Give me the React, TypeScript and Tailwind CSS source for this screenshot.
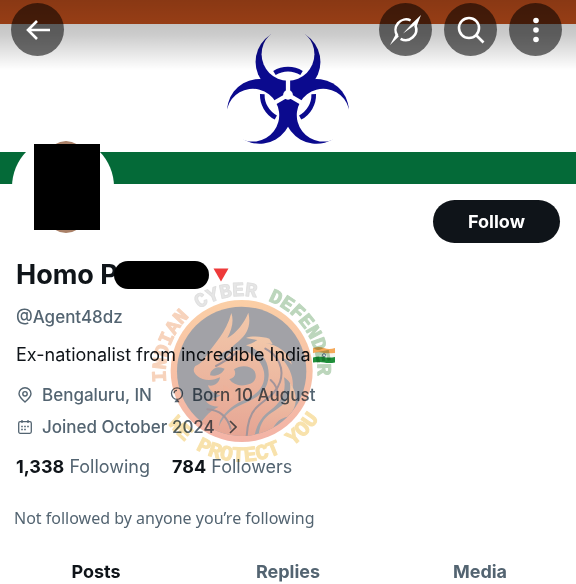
import { ReactNode } from "react";
import clsx from "clsx";

const HORN_ANGLES = [0, 120, 240];

const TABS = ["Posts", "Replies", "Media"];

const Biohazard = () => (
  <svg viewBox="-66 -66 132 124" className="mt-[7px] h-[120px] w-[128px]" aria-hidden="true">
    <mask id="horns" maskUnits="userSpaceOnUse" x="-80" y="-80" width="160" height="160">
      {HORN_ANGLES.map((angle) => (
        <circle key={angle} cy="-34" r="33.5" fill="#fff" transform={`rotate(${angle})`} />
      ))}
      {HORN_ANGLES.map((angle) => (
        <g key={angle} transform={`rotate(${angle})`}>
          <circle cy="-42" r="27.3" />
          <rect x="-2.2" y="-18" width="4.4" height="18" />
        </g>
      ))}
      <circle r="5" />
    </mask>
    <rect x="-80" y="-80" width="160" height="160" fill="#0b0a8e" mask="url(#horns)" />
    {HORN_ANGLES.map((angle) => (
      <path
        key={angle}
        d="M-14 -22.6A26.6 26.6 0 0 1 14 -22.6"
        fill="none"
        stroke="#0b0a8e"
        strokeWidth="4.8"
        transform={`rotate(${angle})`}
      />
    ))}
  </svg>
);

const Watermark = () => (
  <svg
    viewBox="0 0 600 600"
    className="pointer-events-none absolute top-[270px] left-[140px] size-[200px] mix-blend-multiply"
    aria-hidden="true"
  >
    <defs>
      <linearGradient id="rim" x1="0" y1="0" x2="0" y2="1">
        <stop offset="0" stopColor="#fbcfa6" />
        <stop offset="1" stopColor="#f3b3a6" />
      </linearGradient>
      <linearGradient id="scales" x1="0" y1="0" x2="0" y2="1">
        <stop offset="0" stopColor="#f2c8aa" />
        <stop offset="1" stopColor="#e5a292" />
      </linearGradient>
      <clipPath id="disc">
        <circle cx="305" cy="304" r="194" />
      </clipPath>
      <path id="arcTop" d="M79 336A228 228 0 1 1 531 336" />
      <path id="arcBottom" d="M34 304A271 271 0 0 0 576 304" />
    </defs>
    <circle cx="305" cy="303" r="213" fill="url(#rim)" />
    <circle cx="305" cy="304" r="194" fill="#a2a2a7" />
    <g clipPath="url(#disc)">
      {/* head, horns and mane */}
      <path
        d="M166 288C184 282 196 264 204 250C222 222 258 190 274 129C282 152 276 178 262 204C290 188 312 160 325 128C334 166 322 192 296 214C280 226 268 238 262 250C286 238 312 238 330 250C352 262 368 284 372 306C378 350 352 372 318 388C284 402 258 420 240 452L228 520L172 480C184 450 206 424 236 410C218 410 206 404 198 394C218 394 232 388 242 376C224 372 208 362 204 346C222 350 238 340 240 322C220 332 190 334 172 318C160 308 158 298 166 288Z"
        fill="url(#scales)"
      />
      {/* neck and body */}
      <path
        d="M318 204C336 196 372 200 388 206L398 222L376 220C414 224 446 248 456 284C446 272 436 266 424 264C448 290 462 322 458 354C450 336 442 328 432 322C440 366 424 396 392 420C364 440 346 466 340 520H226C228 470 252 430 296 408C344 386 382 372 386 318C388 272 362 240 318 226C330 222 344 216 352 210Z"
        fill="url(#scales)"
      />
      <path
        d="M356 520C352 462 374 440 404 422C442 398 454 376 450 338C474 370 474 412 444 440C424 444 406 452 392 490Z"
        fill="url(#scales)"
      />
      <g fill="#a2a2a7">
        <path d="M212 306C222 290 238 288 254 296C246 312 228 320 210 316Z" />
        <path d="M282 298C302 284 332 286 344 304C354 326 340 342 320 344C300 350 280 344 268 328C284 324 290 312 282 298Z" />
        <path d="M234 262C248 244 262 240 278 240C268 250 262 264 246 272Z" />
      </g>
      <g fill="none" stroke="#a3959a" strokeWidth="6" strokeLinecap="round">
        <path d="M376 236C414 256 434 294 420 336C408 374 374 388 348 414C330 432 322 462 320 500" />
        <path d="M202 418C236 420 262 440 272 476" />
        <path d="M290 248C266 266 244 280 228 288" />
        <path d="M392 330C408 344 414 360 410 376" />
      </g>
      <path
        d="M250 346C268 354 282 368 278 384C256 396 236 394 218 384C240 384 254 370 250 346Z"
        fill="#edb19a"
      />
    </g>
    <g className="font-['Liberation_Mono',monospace] font-bold" strokeWidth="3" strokeLinejoin="round">
      <text className="text-[60px]">
        <textPath href="#arcTop">
          <tspan fill="#f7d3bc" stroke="#f7d3bc">INDIAN </tspan>
          <tspan fill="#e6e6e6" stroke="#e0e0e0">CYBER </tspan>
          <tspan fill="#bcd6bc" stroke="#bcd6bc">DEFENDER</tspan>
        </textPath>
      </text>
      <text fill="#f8e2ac" stroke="#f8e2ac" textAnchor="middle" className="text-[64px]">
        <textPath href="#arcBottom" startOffset="51%">
          WE PROTECT YOU
        </textPath>
      </text>
    </g>
  </svg>
);

const RoundButton = ({ label, children }: { label: string; children: ReactNode }) => (
  <button
    type="button"
    aria-label={label}
    className="flex size-[53px] items-center justify-center rounded-full bg-black/55 text-white"
  >
    {children}
  </button>
);

const Banner = () => (
  <header className="relative">
    <div className="h-6 bg-[#c4501c]" />
    <div className="flex h-32 justify-center bg-white">
      <Biohazard />
    </div>
    <div className="h-8 bg-[#046a38]" />
    <div className="absolute inset-x-0 top-0 h-[70px] bg-linear-to-b from-black/30 via-black/20 to-transparent" />
    <nav className="absolute inset-x-0 top-[3px] flex items-center pr-3.5 pl-[11px]">
      <RoundButton label="Back">
        <svg viewBox="0 0 24 20" className="h-5 w-6" fill="none" stroke="currentColor" strokeWidth="2.6">
          <path d="M11 1L2 10L11 19M2 10H24" />
        </svg>
      </RoundButton>
      <div className="ml-auto flex gap-3">
        <RoundButton label="Grok">
          <svg viewBox="0 0 31 30" className="h-[30px] w-[31px]" fill="none" stroke="currentColor" strokeWidth="2.6">
            <path d="M20.6 5.4A10.6 10.6 0 0 0 7.4 21" />
            <path d="M25.4 10.4A10.6 10.6 0 0 1 10.6 23.8" />
            <path
              d="M31 0L26.6 11.4L24.2 10.6L13 18.6L22.6 8ZM0 30L6.2 18.6L8.8 21.4Z"
              fill="currentColor"
              stroke="none"
            />
          </svg>
        </RoundButton>
        <RoundButton label="Search">
          <svg viewBox="0 0 28 28" className="size-7" fill="none" stroke="currentColor" strokeWidth="2.6">
            <circle cx="12" cy="12" r="10" />
            <path d="M19 19L26.5 26.5" />
          </svg>
        </RoundButton>
        <RoundButton label="More">
          <svg viewBox="0 0 6 26" className="h-[26px] w-1.5" fill="currentColor">
            <circle cx="3" cy="3.5" r="2.8" />
            <circle cx="3" cy="13" r="2.8" />
            <circle cx="3" cy="22.5" r="2.8" />
          </svg>
        </RoundButton>
      </div>
    </nav>
    <div className="absolute top-[136px] left-3 flex size-[102px] items-center justify-center rounded-full bg-white">
      <div className="ml-1.5 flex h-[92px] w-[60px] items-center justify-center rounded-[50%] bg-[#a98067]">
        <div className="ml-0.5 h-[86px] w-[66px] shrink-0 bg-black" />
      </div>
    </div>
  </header>
);

const PinIcon = () => (
  <svg viewBox="0 0 14 16" className="h-4 w-3.5" fill="none" stroke="currentColor" strokeWidth="1.4">
    <path d="M7 15C3.5 12 1 9.6 1 6.8a6 6 0 0 1 12 0C13 9.6 10.5 12 7 15Z" />
    <circle cx="7" cy="6.8" r="2.2" />
  </svg>
);

const BalloonIcon = () => (
  <svg viewBox="0 0 14 16" className="h-4 w-3.5" fill="none" stroke="currentColor" strokeWidth="1.3">
    <path d="M7 12.4C3.8 12.4 1.5 9.6 1.5 6.3a5.5 5.5 0 0 1 11 0C12.5 9.6 10.2 12.4 7 12.4ZM7 12.4L5.6 14.6H8.4L7 12.4M4 6.2A3 3 0 0 1 7 3.3" />
  </svg>
);

const CalendarIcon = () => (
  <svg viewBox="0 0 14 16" className="h-4 w-3.5" fill="none" stroke="currentColor" strokeWidth="1.3">
    <rect x="0.7" y="2.7" width="12.6" height="11.6" rx="1.5" />
    <path d="M4 1V4M10 1V4" />
    <path d="M3.2 7.5H11M3.2 10.5H8.5" strokeWidth="1.6" strokeDasharray="1.6 1.4" />
  </svg>
);

const FlagIcon = () => (
  <svg viewBox="0 0 22 16" className="h-4 w-[22px]" role="img" aria-label="India">
    <path d="M0 1Q6 -1 11 1T22 1V6Q16 7 11 6T0 6Z" fill="#f5a95a" />
    <path d="M0 6Q6 5 11 6T22 6V10Q16 11 11 10T0 10.5Z" fill="#f6f6f2" />
    <path d="M0 10.5Q6 9 11 10T22 10V15.5Q16 16.500 11 15.5T0 15.5Z" fill="#1f8f3a" />
    <circle cx="11" cy="8.2" r="1.6" fill="none" stroke="#55628f" strokeWidth="0.8" />
  </svg>
);

const App = () => {
  return (
    <div className="relative bg-white font-[Inter,sans-serif] text-[#536471]">
      <Banner />

      <main className="px-4">
        <div className="flex justify-end pt-4">
          <button
            type="button"
            className="h-[43px] w-[127px] rounded-full bg-[#0f1419] text-[18px] font-bold text-white"
          >
            Follow
          </button>
        </div>

        <h1 className="mt-4 flex h-8 items-center text-[27px] leading-8 font-bold text-[#0f1419]">
          Homo P
          <span className="-ml-1 h-7 w-[95px] rounded-full bg-black" />
          <svg viewBox="0 0 16 14" className="ml-1 h-3.5 w-4" aria-hidden="true">
            <path d="M0.5 0.5H15.5L8 13.5Z" fill="#ee3a3a" />
          </svg>
        </h1>
        <p className="mt-3.5 text-[17px] leading-6 font-medium">@Agent48dz</p>

        <p className="mt-3.5 flex items-center gap-0.5 text-[18px] leading-6 text-[#0f1419]">
          Ex-nationalist from incredible India
          <FlagIcon />
        </p>

        <div className="mt-4 flex flex-col gap-2 text-[17px] leading-6 font-medium">
          <div className="flex gap-[18px]">
            <span className="flex items-center gap-2.5 pl-0.5">
              <PinIcon />
              Bengaluru, IN
            </span>
            <span className="flex items-center gap-2">
              <BalloonIcon />
              Born 10 August
            </span>
          </div>
          <div className="flex items-center gap-2.5 pl-0.5">
            <CalendarIcon />
            Joined October 2024
            <svg viewBox="0 0 8 14" className="ml-1 h-3.5 w-2" fill="none" stroke="currentColor" strokeWidth="1.6">
              <path d="M1 1L7 7L1 13" />
            </svg>
          </div>
        </div>

        <div className="mt-4 flex gap-[22px] text-[18px] leading-6">
          <a href="#following">
            <b className="text-[#0f1419]">1,338</b> Following
          </a>
          <a href="#followers">
            <b className="text-[#0f1419]">784</b> Followers
          </a>
        </div>
      </main>

      <p className="mt-[27px] px-3.5 font-['Noto_Sans',sans-serif] text-[16px] leading-6">
        Not followed by anyone you’re following
      </p>

      <div className="mt-[30px] grid grid-cols-3">
        {TABS.map((tab, i) => (
          <button
            key={tab}
            type="button"
            className={clsx("text-[18px] leading-6 font-bold", i === 0 && "text-[#0f1419]")}
          >
            {tab}
          </button>
        ))}
      </div>

      <Watermark />
    </div>
  );
};
export default App;
